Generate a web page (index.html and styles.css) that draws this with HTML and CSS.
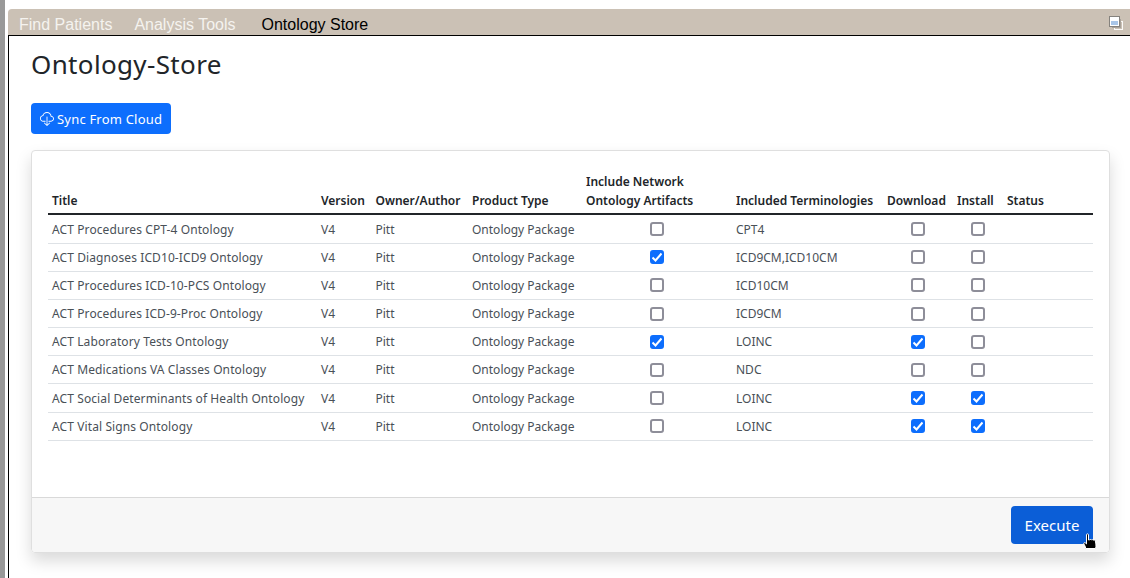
FILE: index.html
```html
<!DOCTYPE html>
<html>
    <head>
        <meta charset="UTF-8">
        <title>Ontology Store</title>
        <link rel="stylesheet" href="styles.css">
    </head>
    <body>
        <div class="window">
            <div class="tabs">
                <a class="tab">Find Patients</a>
                <a class="tab">Analysis Tools</a>
                <a class="tab active">Ontology Store</a>
                <svg class="win-icon" width="14" height="14" viewBox="0 0 14 14">
                    <rect x="5.5" y="5.5" width="8" height="8" fill="#cbc1b5" stroke="#fbfaf8"/>
                    <rect x="3.5" y="3.5" width="8" height="8" fill="#cbc1b5" stroke="#a8a29a"/>
                    <rect x="0.5" y="0.5" width="10" height="10" fill="#fff" stroke="#85827d"/>
                    <rect x="2" y="5" width="7" height="4" fill="#a9c6e8"/>
                </svg>
            </div>
            <div class="content">
                <h1>Ontology-Store</h1>
                <button class="btn sync">
                    <svg width="14" height="14" viewBox="0 0 16 16" fill="#fff">
                        <path d="M4.406 1.342A5.53 5.53 0 0 1 8 0c2.69 0 4.923 2 5.166 4.579C14.758 4.804 16 6.137 16 7.773 16 9.569 14.502 11 12.687 11H10a.5.5 0 0 1 0-1h2.688C13.979 10 15 8.988 15 7.773c0-1.216-1.02-2.228-2.313-2.228h-.5v-.5C12.188 2.825 10.328 1 8 1a4.53 4.53 0 0 0-2.941 1.1c-.757.652-1.153 1.438-1.153 2.055v.448l-.445.049C2.064 4.805 1 5.952 1 7.318 1 8.785 2.23 10 3.781 10H6a.5.5 0 0 1 0 1H3.781C1.708 11 0 9.366 0 7.318c0-1.763 1.266-3.223 2.942-3.593.143-.863.698-1.723 1.464-2.383z"/>
                        <path d="M7.646 15.854a.5.5 0 0 0 .708 0l3-3a.5.5 0 0 0-.708-.708L8.5 14.293V5.5a.5.5 0 0 0-1 0v8.793l-2.146-2.147a.5.5 0 0 0-.708.708l3 3z"/>
                    </svg>Sync From Cloud
                </button>
                <div class="card">
                    <div class="card-body">
                        <table>
                            <colgroup>
                                <col class="c-title"><col class="c-version"><col class="c-owner"><col class="c-type"><col class="c-network"><col class="c-terms"><col class="c-download"><col class="c-install"><col>
                            </colgroup>
                            <thead>
                                <tr>
                                    <th>Title</th>
                                    <th>Version</th>
                                    <th>Owner/Author</th>
                                    <th>Product Type</th>
                                    <th>Include Network<br>Ontology Artifacts</th>
                                    <th>Included Terminologies</th>
                                    <th>Download</th>
                                    <th>Install</th>
                                    <th>Status</th>
                                </tr>
                            </thead>
                            <tbody>
                                <tr>
                                    <td class="name">ACT Procedures CPT-4 Ontology</td><td>V4</td><td>Pitt</td><td>Ontology Package</td>
                                    <td class="check-net"><input type="checkbox"></td><td>CPT4</td>
                                    <td class="check"><input type="checkbox"></td><td class="check"><input type="checkbox"></td><td></td>
                                </tr>
                                <tr>
                                    <td class="name">ACT Diagnoses ICD10-ICD9 Ontology</td><td>V4</td><td>Pitt</td><td>Ontology Package</td>
                                    <td class="check-net"><input type="checkbox" checked></td><td>ICD9CM,ICD10CM</td>
                                    <td class="check"><input type="checkbox"></td><td class="check"><input type="checkbox"></td><td></td>
                                </tr>
                                <tr>
                                    <td class="name">ACT Procedures ICD-10-PCS Ontology</td><td>V4</td><td>Pitt</td><td>Ontology Package</td>
                                    <td class="check-net"><input type="checkbox"></td><td>ICD10CM</td>
                                    <td class="check"><input type="checkbox"></td><td class="check"><input type="checkbox"></td><td></td>
                                </tr>
                                <tr>
                                    <td class="name">ACT Procedures ICD-9-Proc Ontology</td><td>V4</td><td>Pitt</td><td>Ontology Package</td>
                                    <td class="check-net"><input type="checkbox"></td><td>ICD9CM</td>
                                    <td class="check"><input type="checkbox"></td><td class="check"><input type="checkbox"></td><td></td>
                                </tr>
                                <tr>
                                    <td class="name">ACT Laboratory Tests Ontology</td><td>V4</td><td>Pitt</td><td>Ontology Package</td>
                                    <td class="check-net"><input type="checkbox" checked></td><td>LOINC</td>
                                    <td class="check"><input type="checkbox" checked></td><td class="check"><input type="checkbox"></td><td></td>
                                </tr>
                                <tr>
                                    <td class="name">ACT Medications VA Classes Ontology</td><td>V4</td><td>Pitt</td><td>Ontology Package</td>
                                    <td class="check-net"><input type="checkbox"></td><td>NDC</td>
                                    <td class="check"><input type="checkbox"></td><td class="check"><input type="checkbox"></td><td></td>
                                </tr>
                                <tr>
                                    <td class="name">ACT Social Determinants of Health Ontology</td><td>V4</td><td>Pitt</td><td>Ontology Package</td>
                                    <td class="check-net"><input type="checkbox"></td><td>LOINC</td>
                                    <td class="check"><input type="checkbox" checked></td><td class="check"><input type="checkbox" checked></td><td></td>
                                </tr>
                                <tr>
                                    <td class="name">ACT Vital Signs Ontology</td><td>V4</td><td>Pitt</td><td>Ontology Package</td>
                                    <td class="check-net"><input type="checkbox"></td><td>LOINC</td>
                                    <td class="check"><input type="checkbox" checked></td><td class="check"><input type="checkbox" checked></td><td></td>
                                </tr>
                            </tbody>
                        </table>
                    </div>
                    <div class="card-footer">
                        <button class="btn execute">Execute</button>
                        <svg class="cursor" width="15" height="17" viewBox="0 0 15 17">
                            <path d="M3.500 1.500C3.500.700 5.500.700 5.500 1.500V7h1c.4-.7 1.500-.7 1.800 0 .5-.6 1.600-.5 1.800.2.600-.5 2-.4 2.200.6l.6 3.200c.2 1.500.1 3.200-.3 4.500H2.800L2 13 .9 11c-.5-1.100.7-1.900 1.500-1.100l1.100 1z" fill="#000" stroke="#fff" stroke-width="1"/>
                        </svg>
                    </div>
                </div>
            </div>
        </div>
    </body>
</html>
```

FILE: styles.css
```css
body{
    margin:0;
    height:578px;
    overflow:hidden;
    background-color:#fff;
    border-left:5px solid #999;
    padding:9px 0 0 3px;
    box-sizing:border-box;
    font-family:'Noto Sans', sans-serif;
    color:#212529;
}

h1{
    margin:0;
    font-size:26px;
    font-weight:400;
    line-height:36px;
    letter-spacing:.35px;
}

table{
    width:100%;
    border-collapse:collapse;
    table-layout:fixed;
    font-size:12px;
}

th{
    font-weight:600;
    text-align:left;
    vertical-align:bottom;
    line-height:19px;
    padding:12px 4px 3px 4px;
    border-bottom:2px solid #212529;
}

td{
    height:28.17px;
    box-sizing:border-box;
    padding:0 4px;
    border-bottom:1px solid #dee2e6;
    color:#495057;
    white-space:nowrap;
}

tbody tr:first-child td{
    height:29.17px;
    padding-top:1px;
}

.name{
    letter-spacing:.1px;
}

input[type=checkbox]{
    appearance:none;
    display:block;
    width:14px;
    height:14px;
    margin:0;
    background-color:#fff;
    border:2px solid #8e8e99;
    border-radius:3px;
    box-sizing:border-box;
}

input[type=checkbox]:checked{
    background-color:#0d6efd;
    border-color:#0d6efd;
    background-image:url("data:image/svg+xml,%3Csvg xmlns='http://www.w3.org/2000/svg' viewBox='0 0 14 14'%3E%3Cpath d='M2.5 7.500l3 3 6-7' fill='none' stroke='%23fff' stroke-width='2'/%3E%3C/svg%3E");
    background-size:14px 14px;
    background-position:-2px -2px;
}

.window{
    display:flex;
    flex-direction:column;
    height:569px;
}

.tabs{
    display:flex;
    align-items:center;
    flex:none;
    background-color:#cbc1b5;
    border-bottom:1px solid #000;
    border-radius:4px 0 0 0;
    padding:5px 0 0 11px;
    box-sizing:border-box;
    height:27px;
    font-family:'Liberation Sans', sans-serif;
    font-size:16px;
}

.tab{
    color:#f5f3ef;
    margin-right:22px;
}

.tab.active{
    color:#000;
    margin-left:4px;
}

.win-icon{
    margin-left:auto;
    margin-right:7px;
    margin-top:-3px;
}

.content{
    flex:1;
    border-left:1px solid #000;
    padding:10px 20px 0 22px;
}

.btn{
    font-family:inherit;
    color:#fff;
    border:none;
    border-radius:4px;
    background-color:#0d6efd;
}

.sync{
    display:flex;
    align-items:center;
    width:140px;
    height:31px;
    margin-top:21px;
    padding:0 0 0 9px;
    font-size:13px;
    letter-spacing:.2px;
}

.sync svg{
    margin-right:3px;
}

.card{
    margin-top:16px;
    height:403px;
    box-sizing:border-box;
    display:flex;
    flex-direction:column;
    border:1px solid #dfdfdf;
    border-radius:4px;
    box-shadow:0 8px 16px rgba(0,0,0,.15);
}

.card-body{
    flex:1;
    padding:9px 16px 0 16px;
}

.card-footer{
    position:relative;
    display:flex;
    justify-content:flex-end;
    height:55px;
    box-sizing:border-box;
    padding:8px 16px;
    background-color:#f7f7f7;
    border-top:1px solid #d9d9d9;
    border-radius:0 0 4px 4px;
}

.execute{
    width:82px;
    height:38px;
    font-size:15px;
    background-color:#0b5ed7;
}

.cursor{
    position:absolute;
    right:11px;
    bottom:2px;
}

.check-net{
    padding-left:68px;
}

.check{
    padding-left:28px;
}

.check + .check{
    padding-left:18px;
}

.c-title{ width:269px; }
.c-version{ width:54.5px; }
.c-owner{ width:96.5px; }
.c-type{ width:114px; }
.c-network{ width:150px; }
.c-terms{ width:151px; }
.c-download{ width:70px; }
.c-install{ width:50px; }
```
